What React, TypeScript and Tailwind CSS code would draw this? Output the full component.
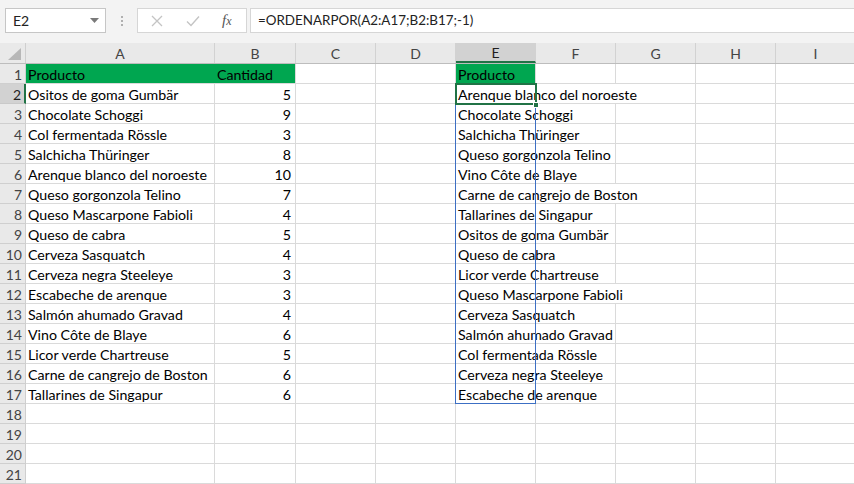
import { ReactNode } from "react";

const columns = ["A", "B", "C", "D", "E", "F", "G", "H", "I"];
const colWidths = [189, 81, 80, 80, 80, 80, 80, 80, 80];

const source: [string, number][] = [
  ["Ositos de goma Gumbär", 5],
  ["Chocolate Schoggi", 9],
  ["Col fermentada Rössle", 3],
  ["Salchicha Thüringer", 8],
  ["Arenque blanco del noroeste", 10],
  ["Queso gorgonzola Telino", 7],
  ["Queso Mascarpone Fabioli", 4],
  ["Queso de cabra", 5],
  ["Cerveza Sasquatch", 4],
  ["Cerveza negra Steeleye", 3],
  ["Escabeche de arenque", 3],
  ["Salmón ahumado Gravad", 4],
  ["Vino Côte de Blaye", 6],
  ["Licor verde Chartreuse", 5],
  ["Carne de cangrejo de Boston", 6],
  ["Tallarines de Singapur", 6],
];

const sorted = [
  "Arenque blanco del noroeste",
  "Chocolate Schoggi",
  "Salchicha Thüringer",
  "Queso gorgonzola Telino",
  "Vino Côte de Blaye",
  "Carne de cangrejo de Boston",
  "Tallarines de Singapur",
  "Ositos de goma Gumbär",
  "Queso de cabra",
  "Licor verde Chartreuse",
  "Queso Mascarpone Fabioli",
  "Cerveza Sasquatch",
  "Salmón ahumado Gravad",
  "Col fermentada Rössle",
  "Cerveza negra Steeleye",
  "Escabeche de arenque",
];

const font = { fontFamily: "Lato, 'Liberation Sans', sans-serif" };

function Cell({
  width,
  children,
  green,
  right,
  greenRight,
}: {
  width: number;
  children?: ReactNode;
  green?: boolean;
  right?: boolean;
  greenRight?: boolean;
}) {
  return (
    <div
      className={`relative h-5 shrink-0 border-b ${
        greenRight ? "border-r-transparent" : "border-r"
      } border-[#dadada] ${green ? "bg-[#00a650]" : ""}`}
      style={{ width }}
    >
      {children != null && (
        <div
          className={`absolute inset-y-0 z-10 flex items-end whitespace-nowrap text-[14.2px] text-black ${
            right ? "right-1" : "left-[2px]"
          }`}
        >
          <span className={`h-[19px] pt-[1px] leading-[19px] ${green ? "" : "bg-white"}`}>
            {children}
          </span>
        </div>
      )}
    </div>
  );
}

export default function App() {
  const rows = Array.from({ length: 21 }, (_, i) => i + 1);

  return (
    <div className="relative h-[484px] w-[854px] overflow-hidden bg-white" style={font}>
      {/* formula bar */}
      <div className="flex h-[43px] items-start bg-[#f3f3f3] pt-2 pl-[5px]">
        <div className="flex h-[25px] w-[101px] items-center justify-between border border-[#c6c6c6] bg-white pl-[7px] pr-[6px] text-[14px] text-[#222]">
          <span>E2</span>
          <svg width="9" height="5" viewBox="0 0 9 5">
            <path d="M0 0h9L4.5 5z" fill="#7a7a7a" />
          </svg>
        </div>
        <div className="flex h-[25px] w-[31px] flex-col items-center justify-center gap-[2px]">
          <span className="h-[2px] w-[2px] bg-[#b0b0b0]" />
          <span className="h-[2px] w-[2px] bg-[#b0b0b0]" />
          <span className="h-[2px] w-[2px] bg-[#b0b0b0]" />
        </div>
        <div className="flex h-[25px] w-[110px] items-center border border-[#d6d6d6] bg-white">
          <svg width="12" height="12" viewBox="0 0 12 12" className="ml-[13px]">
            <path d="M1 1l10 10M11 1L1 11" stroke="#c4c4c4" strokeWidth="1.3" />
          </svg>
          <svg width="14" height="12" viewBox="0 0 14 12" className="ml-[23px]">
            <path d="M1 6.5l4 4L13 1.5" stroke="#c4c4c4" strokeWidth="1.4" fill="none" />
          </svg>
          <span
            className="ml-[22px] text-[15px] italic text-[#555]"
            style={{ fontFamily: "'Liberation Serif', serif" }}
          >
            f<span className="text-[12px]">x</span>
          </span>
        </div>
        <div className="ml-[3px] flex h-[25px] flex-1 items-center border-y border-l border-[#d6d6d6] bg-white pl-[7px] text-[13.4px] text-[#222]">
          =ORDENARPOR(A2:A17;B2:B17;-1)
        </div>
      </div>

      {/* column headers */}
      <div className="flex h-[21px] border-b border-[#bdbdbd] bg-[#e9e9e9]">
        <div className="relative w-[26px] shrink-0 border-r border-[#cfcfcf]">
          <svg width="13" height="12" viewBox="0 0 13 12" className="absolute bottom-[3px] right-[4px]">
            <path d="M13 0v12H0z" fill="#b7b7b7" />
          </svg>
        </div>
        {columns.map((c, i) => (
          <div
            key={c}
            className={`flex shrink-0 items-center justify-center border-r border-[#d2d2d2] text-[14px] ${
              c === "E" ? "border-b-2 border-b-[#217346] bg-[#d2d2d2] text-[#1e1e1e]" : "text-[#444]"
            }`}
            style={{ width: colWidths[i] }}
          >
            {c}
          </div>
        ))}
      </div>

      {/* rows */}
      {rows.map((r) => {
        const data = r >= 2 && r <= 17 ? source[r - 2] : null;
        const sortedName = r >= 2 && r <= 17 ? sorted[r - 2] : null;
        return (
          <div key={r} className="flex">
            <div
              className={`flex h-5 w-[26px] shrink-0 items-center justify-end border-b pr-[3px] pt-[1px] text-[14px] ${
                r === 2
                  ? "border-r-2 border-b-[#c9c9c9] border-r-[#217346] bg-[#d2d2d2] text-[#1e1e1e]"
                  : "border-r border-[#cfcfcf] bg-[#e9e9e9] text-[#444]"
              }`}
            >
              {r}
            </div>
            <Cell width={colWidths[0]} green={r === 1} greenRight={r === 1}>
              {r === 1 ? "Producto" : data?.[0]}
            </Cell>
            <Cell width={colWidths[1]} green={r === 1} right={r !== 1}>
              {r === 1 ? "Cantidad" : data?.[1]}
            </Cell>
            <Cell width={colWidths[2]} />
            <Cell width={colWidths[3]} />
            <Cell width={colWidths[4]} green={r === 1}>
              {r === 1 ? "Producto" : sortedName}
            </Cell>
            <Cell width={colWidths[5]} />
            <Cell width={colWidths[6]} />
            <Cell width={colWidths[7]} />
            <Cell width={colWidths[8]} />
          </div>
        );
      })}

      {/* spill range border E2:E17 */}
      <div className="pointer-events-none absolute left-[455px] top-[84px] z-20 h-[320px] w-[81px] border border-[#3c6fc4]" />
      {/* active cell E2 */}
      <div className="pointer-events-none absolute left-[455px] top-[83px] z-30 h-[22px] w-[82px] border-2 border-[#217346]" />
      <div className="pointer-events-none absolute left-[533px] top-[102px] z-30 h-[6px] w-[6px] border border-white bg-[#217346]" />
    </div>
  );
}
